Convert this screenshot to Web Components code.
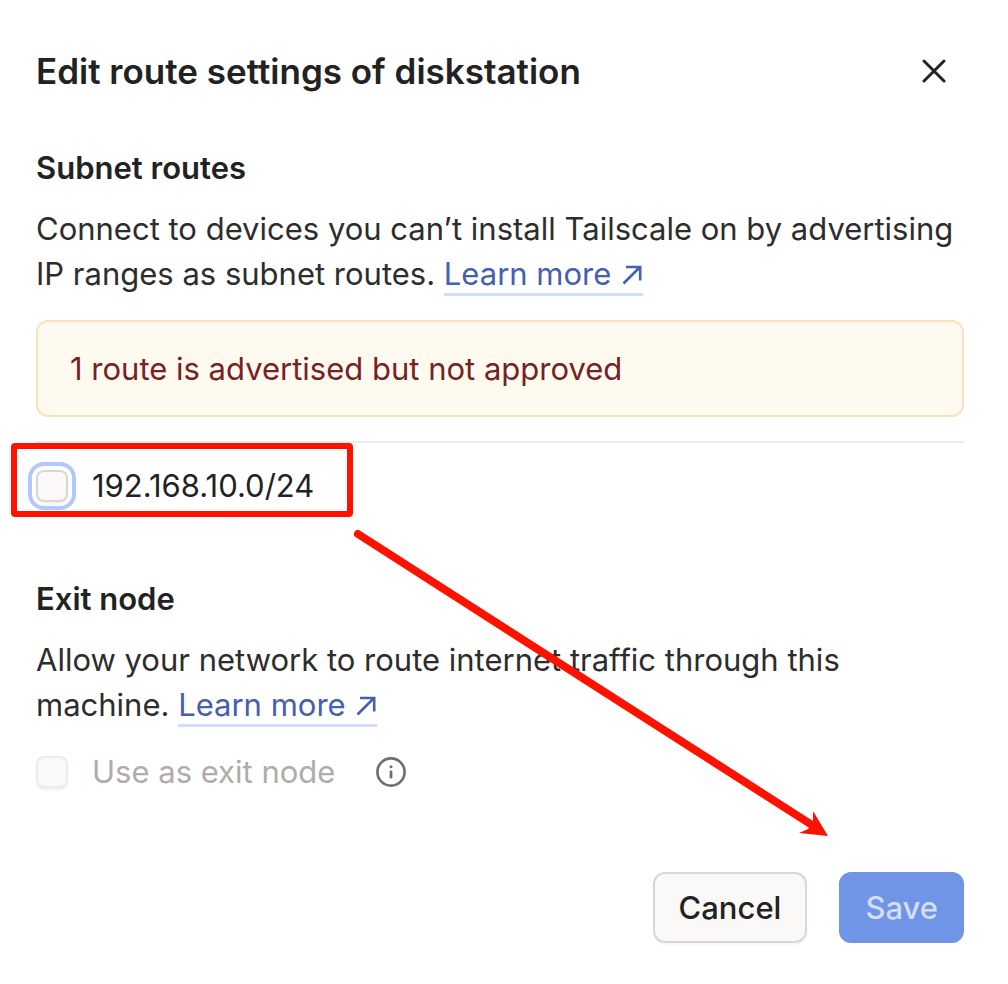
<!DOCTYPE html>
<html lang="en">
<head>
<meta charset="utf-8">
<meta name="viewport" content="width=device-width, initial-scale=1">
<title>Edit route settings of diskstation</title>
<style>
  body { margin: 0; background: #fff; font-family: Inter, "Liberation Sans", sans-serif; color: #2e2d2d; overflow-x: hidden; }
</style>
</head>
<body>
<route-dialog></route-dialog>

<template id="t-dialog">
  <style>
    :host { display: block; position: relative; padding: 48px 44px 41px 36px; font-size: 31px; line-height: 45px; overflow: hidden; }
    header { display: flex; justify-content: space-between; align-items: center; height: 46px; margin-bottom: 51px; }
    h1 { margin: 0; font-size: 35px; line-height: 46px; font-weight: 600; color: #232222; }
    .close { display: flex; border: 0; padding: 12px; margin: 0 6px 0 0; background: none; color: #232222; cursor: pointer; }
    hr { border: 0; height: 2px; margin: 24px 0 20px; background: #eeebea; }
    footer { display: flex; justify-content: flex-end; gap: 32px; margin-top: 78px; }
    .more { margin-top: 68px; }
    .opt { display: flex; align-items: center; gap: 40px; margin-top: 22px; }
    .info { display: flex; color: #706e6d; }
  </style>
  <header>
    <h1>Edit route settings of diskstation</h1>
    <button class="close" aria-label="Close">
      <svg width="24" height="26" viewBox="0 -1 24 26" fill="none" stroke="currentColor" stroke-width="3" stroke-linecap="round"><path d="M2 2 22 22M22 2 2 22"/></svg>
    </button>
  </header>
  <settings-section>
    <span slot="title">Subnet routes</span>
    Connect to devices you can’t install Tailscale on by advertising IP ranges as subnet routes. <learn-link>Learn more</learn-link>
  </settings-section>
  <notice-box>1 route is advertised but not approved</notice-box>
  <hr>
  <check-option focused>192.168.10.0/24</check-option>
  <settings-section class="more">
    <span slot="title">Exit node</span>
    Allow your network to route internet traffic through this machine. <learn-link>Learn more</learn-link>
  </settings-section>
  <div class="opt">
    <check-option disabled>Use as exit node</check-option>
    <span class="info" role="img" aria-label="More information">
      <svg width="32" height="32" viewBox="0 0 32 32" fill="none" stroke="currentColor"><circle cx="16" cy="16" r="13.6" stroke-width="2.6"/><path d="M16 15.8V21.2" stroke-width="2.8" stroke-linecap="round"/><circle cx="16" cy="10.8" r="1.5" fill="currentColor" stroke="none"/></svg>
    </span>
  </div>
  <footer>
    <dialog-button>Cancel</dialog-button>
    <dialog-button primary>Save</dialog-button>
  </footer>
  <callout-marks></callout-marks>
  <water-mark></water-mark>
</template>

<template id="t-section">
  <style>
    :host { display: block; }
    h2 { margin: 0 0 16px; font-size: 31px; line-height: 45px; font-weight: 600; color: #232222; }
    p { margin: 0; }
  </style>
  <h2><slot name="title"></slot></h2>
  <p><slot></slot></p>
</template>

<template id="t-link">
  <style>
    :host { display: inline; }
    a { display: inline-block; line-height: 39px; color: #4560ad; text-decoration: none; border-bottom: 3px solid #d1defa; white-space: nowrap; }
    svg { margin-left: 2px; }
  </style>
  <a href="#"><slot></slot> <svg width="21" height="20" viewBox="0 0 21 20" fill="none" stroke="currentColor" stroke-width="2.6"><path d="M1.5 18.5 18 2M4 2H18.2V15.5"/></svg></a>
</template>

<template id="t-notice">
  <style>
    :host { display: block; margin-top: 24px; padding: 24px 32px; border: 2px solid #fae2bf; border-radius: 12px; background: #fffaf0; color: #762124; }
  </style>
  <slot></slot>
</template>

<template id="t-check">
  <style>
    :host { display: flex; }
    label { display: flex; align-items: center; gap: 24px; color: #232222; }
    input { appearance: none; flex: none; box-sizing: border-box; width: 32px; height: 32px; margin: 0; border: 2px solid #dad6d5; border-radius: 8px; background: #faf9f8; box-shadow: 0 2px 3px rgba(0,0,0,.06); }
    :host([focused]) input { outline: 4px solid #b2c7fb; outline-offset: 4px; }
    :host([disabled]) label { color: #afacab; }
    :host([disabled]) input { border-color: #eeebea; }
  </style>
  <label><input type="checkbox"><span><slot></slot></span></label>
</template>

<template id="t-button">
  <style>
    :host { display: block; }
    button { display: block; box-sizing: border-box; height: 71px; padding: 0 24px; border: 2px solid #dad6d5; border-radius: 12px; background: #faf9f8; color: #232222; font: 500 31px/45px Inter, "Liberation Sans", sans-serif; box-shadow: 0 2px 2px rgba(0,0,0,.04); cursor: pointer; }
    :host([primary]) button { border-color: #7094e6; background: #7094e6; color: #d3dff9; box-shadow: none; }
  </style>
  <button type="button"><slot></slot></button>
</template>

<template id="t-marks">
  <style>
    :host { display: block; position: absolute; left: 0; top: 0; pointer-events: none; }
    svg { display: block; }
  </style>
  <svg width="840" height="850" viewBox="0 0 840 850" aria-hidden="true">
    <rect x="14" y="446" width="336" height="68" rx="1" fill="none" stroke="#ff1100" stroke-width="6" stroke-linejoin="round"/>
    <path d="M358 534 812 825" stroke="#ff1100" stroke-width="8" stroke-linecap="round"/>
    <path d="M828 836 813 811V822L808 829 799 833Z" fill="#ff1100"/>
  </svg>
</template>

<template id="t-water">
  <style>
    :host { position: absolute; inset: 0; display: block; pointer-events: none; overflow: hidden; color: rgba(0,0,0,.018); font-size: 28px; line-height: 38px; }
    span { position: absolute; white-space: nowrap; transform: rotate(-45deg); transform-origin: 0 0; }
  </style>
</template>

<script>
  class Part extends HTMLElement {
    constructor() {
      super();
      this.attachShadow({ mode: 'open' }).append(
        document.getElementById(this.constructor.template).content.cloneNode(true));
    }
  }
  class SettingsSection extends Part { static template = 't-section'; }
  class LearnLink extends Part { static template = 't-link'; }
  class NoticeBox extends Part { static template = 't-notice'; }
  class CheckOption extends Part {
    static template = 't-check';
    connectedCallback() {
      this.shadowRoot.querySelector('input').disabled = this.hasAttribute('disabled');
    }
  }
  class DialogButton extends Part {
    static template = 't-button';
    connectedCallback() {
      this.shadowRoot.querySelector('button').disabled = this.hasAttribute('primary');
    }
  }
  class CalloutMarks extends Part { static template = 't-marks'; }
  class WaterMark extends Part {
    static template = 't-water';
    connectedCallback() {
      // Start corner of each repeated stamp on the slightly skewed lattice.
      const stamps = [[-20, 204], [517, 181], [259, -79], [237, 458], [775, 436], [-42, 740], [495, 717], [215, 994], [753, 972]];
      for (const [x, y] of stamps) {
        const s = document.createElement('span');
        s.setAttribute('aria-hidden', 'true');
        s.style.left = x + 'px';
        s.style.top = y + 'px';
        ['4439B7C678', '9D5F54BD96', '32644DCCEE', '7A'].forEach((line, i) => {
          if (i) s.append(document.createElement('br'));
          s.append(line);
        });
        this.shadowRoot.append(s);
      }
    }
  }
  class RouteDialog extends Part { static template = 't-dialog'; }
  customElements.define('settings-section', SettingsSection);
  customElements.define('learn-link', LearnLink);
  customElements.define('notice-box', NoticeBox);
  customElements.define('check-option', CheckOption);
  customElements.define('dialog-button', DialogButton);
  customElements.define('callout-marks', CalloutMarks);
  customElements.define('water-mark', WaterMark);
  customElements.define('route-dialog', RouteDialog);
</script>
</body>
</html>
